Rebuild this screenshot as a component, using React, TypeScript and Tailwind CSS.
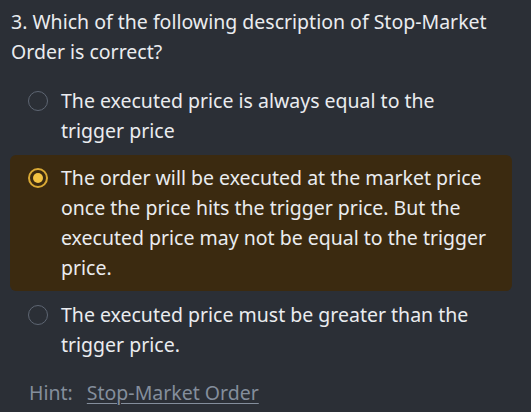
import React from "react";

const options = [
  { lines: ["The executed price is always equal to the", "trigger price"], selected: false },
  {
    lines: [
      "The order will be executed at the market price",
      "once the price hits the trigger price. But the",
      "executed price may not be equal to the trigger",
      "price.",
    ],
    selected: true,
  },
  { lines: ["The executed price must be greater than the", "trigger price."], selected: false },
];

function Radio({ on }: { on: boolean }) {
  if (on) {
    return (
      <span className="mt-[5px] flex h-5 w-5 shrink-0 items-center justify-center rounded-full border-2 border-[#d9a935]">
        <span className="h-[10px] w-[10px] rounded-full bg-[#f3c343]" />
      </span>
    );
  }
  return <span className="mt-[5px] h-5 w-5 shrink-0 rounded-full border-[1.5px] border-[#5e6673]" />;
}

export default function App() {
  return (
    <div
      className="h-[412px] w-[531px] overflow-hidden bg-[#2b2f36] pl-[10px] pt-[7px] text-[19.5px] leading-[30px] text-[#eaecef]"
      style={{ fontFamily: '"Noto Sans", sans-serif' }}
    >
      <p className="pl-px">
        3. Which of the following description of Stop-Market
        <br />
        Order is correct?
      </p>

      <div className="mt-[11px] flex w-[502px] flex-col gap-px">
        {options.map((o, i) => (
          <div
            key={i}
            className={`flex gap-[13px] rounded-md px-[18px] py-2 ${o.selected ? "bg-[#3b2a10]" : ""}`}
          >
            <Radio on={o.selected} />
            <div className="whitespace-nowrap">
              {o.lines.map((l) => (
                <div key={l}>{l}</div>
              ))}
            </div>
          </div>
        ))}
      </div>

      <p className="mt-[10px] pl-[19px] text-[#848e9c]">
        Hint:
        <a className="ml-[14px] underline decoration-1 underline-offset-[3px]">Stop-Market Order</a>
      </p>
    </div>
  );
}
